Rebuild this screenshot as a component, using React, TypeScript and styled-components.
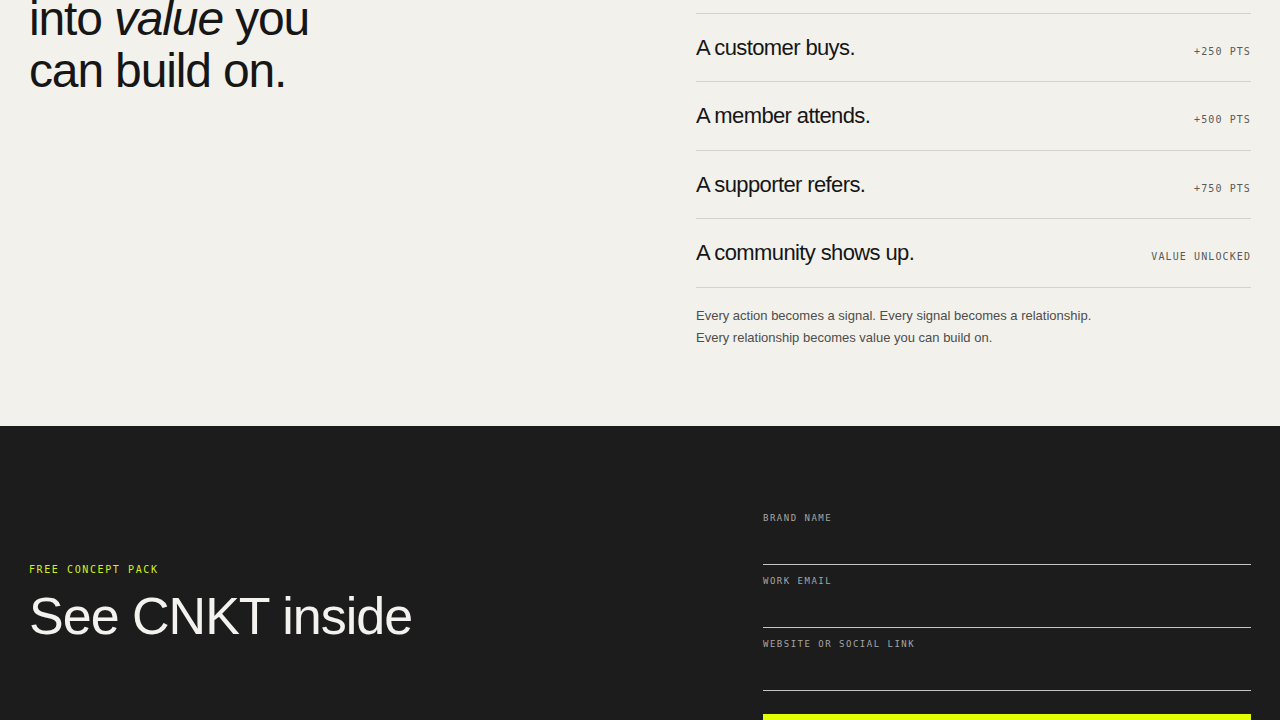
import React from "react";
import styled, { createGlobalStyle } from "styled-components";

const Global = createGlobalStyle`
  html, body { margin: 0; padding: 0; background: #1c1c1c; }
  body { font-family: "Liberation Sans", Arial, sans-serif; -webkit-font-smoothing: antialiased; }
  * { box-sizing: border-box; }
`;

const Page = styled.div`
  margin-top: -59px;
  overflow: hidden;
`;

const LightSection = styled.section`
  background: #f2f1ec;
  padding: 0 29px 77px;
  display: grid;
  grid-template-columns: 1fr 555px;
  align-items: start;
`;

const Headline = styled.h2`
  margin: 0;
  font-family: "Liberation Sans", Arial, sans-serif;
  font-weight: 400;
  font-size: 48px;
  line-height: 52px;
  letter-spacing: -0.024em;
  color: #161616;
  em { font-style: italic; }
`;

const ListCol = styled.div`
  display: flex;
  flex-direction: column;
  padding-top: 4px;
`;

const Row = styled.div`
  height: 68.5px;
  border-bottom: 1px solid #d3d2cd;
  display: flex;
  align-items: baseline;
  justify-content: space-between;
  padding-top: 20px;
`;

const RowTitle = styled.span`
  font-family: "Liberation Sans", Arial, sans-serif;
  font-size: 22px;
  line-height: 28px;
  letter-spacing: -0.028em;
  color: #161616;
`;

const Points = styled.span`
  font-family: "DejaVu Sans Mono", "Liberation Mono", monospace;
  font-size: 10px;
  line-height: 14px;
  letter-spacing: 1.1px;
  color: #5a5a57;
  text-transform: uppercase;
`;

const Note = styled.p`
  margin: 17px 0 0;
  font-family: "Liberation Sans", Arial, sans-serif;
  font-size: 13px;
  line-height: 22px;
  color: #4d4d4a;
`;

const DarkSection = styled.section`
  background: #1c1c1c;
  padding: 76px 29px 80px;
  display: grid;
  grid-template-columns: 1fr 488px;
  align-items: start;
`;

const PackIntro = styled.div`
  padding-top: 61px;
  display: flex;
  flex-direction: column;
  gap: 12px;
`;

const Eyebrow = styled.span`
  font-family: "DejaVu Sans Mono", "Liberation Mono", monospace;
  font-size: 10px;
  line-height: 14px;
  letter-spacing: 1.6px;
  color: #d2ef1e;
  text-transform: uppercase;
`;

const PackTitle = styled.h2`
  margin: 0;
  font-family: "Liberation Sans", Arial, sans-serif;
  font-weight: 400;
  font-size: 52px;
  line-height: 1.05;
  letter-spacing: -0.019em;
  color: #f3f2ee;
`;

const Form = styled.form`
  display: flex;
  flex-direction: column;
`;

const Field = styled.label`
  display: flex;
  flex-direction: column;
  padding-top: 10px;
`;

const FieldLabel = styled.span`
  font-family: "DejaVu Sans Mono", "Liberation Mono", monospace;
  font-size: 9px;
  line-height: 12px;
  letter-spacing: 1.5px;
  color: #a6a6a3;
  text-transform: uppercase;
`;

const Input = styled.input`
  height: 41px;
  border: 0;
  border-bottom: 1px solid #c4c4c1;
  background: transparent;
  color: #f3f2ee;
  font-family: "Liberation Sans", Arial, sans-serif;
  font-size: 15px;
  outline: none;
  padding: 0;
`;

const Submit = styled.button`
  margin-top: 23px;
  height: 56px;
  border: 0;
  background: #e4ff00;
  color: #161616;
  font-family: "DejaVu Sans Mono", "Liberation Mono", monospace;
  font-size: 11px;
  letter-spacing: 1.6px;
  text-transform: uppercase;
  cursor: pointer;
`;

const rows = [
  { title: "A fan follows.", pts: "+100 PTS" },
  { title: "A customer buys.", pts: "+250 PTS" },
  { title: "A member attends.", pts: "+500 PTS" },
  { title: "A supporter refers.", pts: "+750 PTS" },
  { title: "A community shows up.", pts: "Value unlocked" },
];

export default function App() {
  return (
    <Page>
      <Global />
      <LightSection>
        <Headline>
          Turn every action
          <br />
          into <em>value</em> you
          <br />
          can build on.
        </Headline>
        <ListCol>
          {rows.map((r) => (
            <Row key={r.title}>
              <RowTitle>{r.title}</RowTitle>
              <Points>{r.pts}</Points>
            </Row>
          ))}
          <Note>
            Every action becomes a signal. Every signal becomes a relationship.
            <br />
            Every relationship becomes value you can build on.
          </Note>
        </ListCol>
      </LightSection>
      <DarkSection>
        <PackIntro>
          <Eyebrow>Free concept pack</Eyebrow>
          <PackTitle>See CNKT inside</PackTitle>
        </PackIntro>
        <Form onSubmit={(e) => e.preventDefault()}>
          <Field>
            <FieldLabel>Brand name</FieldLabel>
            <Input type="text" />
          </Field>
          <Field>
            <FieldLabel>Work email</FieldLabel>
            <Input type="email" />
          </Field>
          <Field>
            <FieldLabel>Website or social link</FieldLabel>
            <Input type="text" />
          </Field>
          <Submit type="submit">Send me the pack →</Submit>
        </Form>
      </DarkSection>
    </Page>
  );
}
